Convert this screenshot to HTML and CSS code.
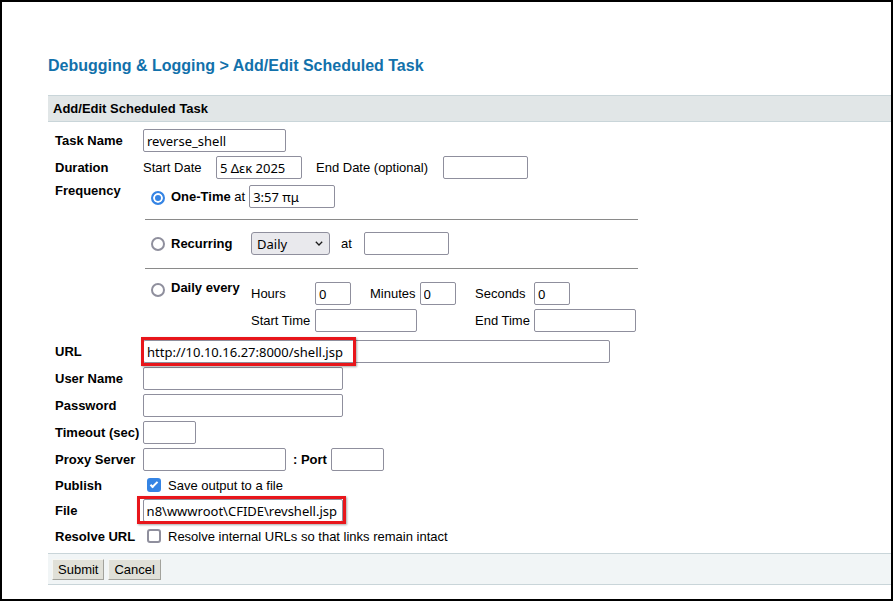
FILE: index.html
```html
<!DOCTYPE html>
<html lang="en">
<head>
<meta charset="utf-8">
<title>Add/Edit Scheduled Task</title>
<link rel="stylesheet" href="styles.css">
</head>
<body>
<div class="frame">
  <div class="page">
    <h1 class="crumb">Debugging &amp; Logging &gt; Add/Edit Scheduled Task</h1>
    <div class="band">Add/Edit Scheduled Task</div>
    <form class="form">
      <div class="label">Task Name</div>
      <div class="val"><input class="txt w143" type="text" value="reverse_shell"></div>

      <div class="label">Duration</div>
      <div class="val">
        <span class="lbl-start">Start Date</span>
        <input class="txt w86" type="text" value="5 Δεκ 2025">
        <span class="lbl-end">End Date (optional)</span>
        <input class="txt w85" type="text" value="">
      </div>

      <div class="label top">Frequency</div>
      <div class="freq">
        <div class="opt">
          <span class="rcell"><input class="radio nudge" type="radio" name="f" checked></span>
          <span><b>One-Time</b> at </span><input class="txt w86 ml4" type="text" value="3:57 πμ">
        </div>
        <div class="rule r1"></div>
        <div class="opt r2">
          <span class="rcell"><input class="radio" type="radio" name="f"></span>
          <b class="olabel">Recurring</b>
          <span class="selwrap">
            <select class="sel"><option>Daily</option></select>
            <svg class="chev" width="8" height="5" viewBox="0 0 8 5"><path d="M0.8 0.8 L4 4 L7.2 0.8" stroke="#1b1b1b" stroke-width="1.3" fill="none"/></svg>
          </span>
          <span class="at">at</span>
          <input class="txt w85 ml12" type="text" value="">
        </div>
        <div class="rule r3"></div>
        <div class="daily">
          <span class="rcell"><input class="radio dn" type="radio" name="f"></span>
          <b class="olabel lh">Daily every</b>
          <div class="dgrid">
            <span>Hours</span>
            <input class="txt w36" type="text" value="0">
            <span class="mins">Minutes <input class="txt w36" type="text" value="0"></span>
            <span>Seconds</span>
            <input class="txt w36" type="text" value="0">
            <span>Start Time</span>
            <input class="txt w102 span2" type="text" value="">
            <span>End Time</span>
            <input class="txt w102" type="text" value="">
          </div>
        </div>
      </div>

      <div class="label">URL</div>
      <div class="val rel">
        <input class="txt w467" type="text" value="http://10.10.16.27:8000/shell.jsp">
        <span class="mark mark-url"></span>
      </div>

      <div class="label">User Name</div>
      <div class="val"><input class="txt w200" type="text" value=""></div>

      <div class="label">Password</div>
      <div class="val"><input class="txt w200" type="password" value=""></div>

      <div class="label">Timeout (sec)</div>
      <div class="val"><input class="txt w53" type="text" value=""></div>

      <div class="label">Proxy Server</div>
      <div class="val">
        <input class="txt w143" type="text" value="">
        <b class="port">: Port</b>
        <input class="txt w53" type="text" value="">
      </div>

      <div class="label">Publish</div>
      <div class="val short">
        <input class="cb" type="checkbox" checked>
        <span>Save output to a file</span>
      </div>

      <div class="label">File</div>
      <div class="val rel">
        <input class="txt w200 rtl" type="text" value="C:\ColdFusion8\wwwroot\CFIDE\revshell.jsp">
        <span class="mark mark-file"></span>
      </div>

      <div class="label">Resolve URL</div>
      <div class="val short">
        <input class="cb" type="checkbox">
        <span>Resolve internal URLs so that links remain intact</span>
      </div>
    </form>
    <div class="footer">
      <button class="btn" type="button">Submit</button>
      <button class="btn" type="button">Cancel</button>
    </div>
  </div>
</div>
</body>
</html>
```

FILE: styles.css
```css
html, body {
  margin: 0;
  padding: 0;
  background: #fff;
}

body {
  font-family: "Liberation Sans", Arial, sans-serif;
  font-size: 13px;
  color: #000;
}

.frame {
  width: 893px;
  height: 601px;
  box-sizing: border-box;
  border: 2px solid #000;
  background: #fff;
  overflow: hidden;
}

.page {
  padding: 55px 0 0 46px;
}

.crumb {
  margin: 0;
  font-size: 16px;
  line-height: 18px;
  font-weight: bold;
  color: #1271ab;
}

.band {
  margin-top: 20px;
  height: 25px;
  line-height: 25px;
  border-top: 1px solid #c9d5d9;
  border-bottom: 1px solid #c9d5d9;
  background: #e1e6e7;
  padding-left: 5px;
  font-weight: bold;
}

.form {
  display: grid;
  grid-template-columns: 88px 1fr;
  row-gap: 4px;
  padding: 7px 0 7px 7px;
}

.label {
  font-weight: bold;
  align-self: center;
  white-space: nowrap;
}

.label.top {
  align-self: start;
  line-height: 15px;
}

.val {
  display: flex;
  align-items: center;
  min-height: 23px;
  white-space: nowrap;
}

.val.short {
  min-height: 20px;
  height: 20px;
}

.rel {
  position: relative;
}

.txt {
  box-sizing: border-box;
  height: 23px;
  margin: 0;
  padding: 0 3px;
  border: 1px solid #8f8f9d;
  border-radius: 2px;
  background: #fff;
  font-family: "Noto Sans", "Open Sans", sans-serif;
  font-size: 13px;
  color: #000;
  outline: none;
}

.rtl {
  direction: rtl;
  padding-right: 5px;
}

.w36 { width: 36px; }
.w53 { width: 53px; }
.w85 { width: 85px; }
.w86 { width: 86px; }
.w102 { width: 102px; }
.w143 { width: 143px; }
.w200 { width: 200px; }
.w467 { width: 467px; }
.ml4 { margin-left: 4px; }
.ml12 { margin-left: 12px; }

.lbl-start { width: 73px; }
.lbl-end { width: 127px; margin-left: 14px; }

/* Frequency block */
.freq {
  display: flex;
  flex-direction: column;
  margin-left: 2px;
  width: 493px;
  padding: 2px 0 4px;
}

.opt {
  display: flex;
  align-items: center;
  height: 23px;
  white-space: nowrap;
}

.rcell {
  box-sizing: border-box;
  width: 26px;
  padding-left: 6px;
  display: flex;
}

.olabel {
  width: 80px;
  flex: none;
}

.lh { line-height: 15px; }

.rule {
  height: 1px;
  background: #8a8a8a;
}

.r1 { margin-top: 11px; }
.r2 { margin-top: 12px; }
.r3 { margin-top: 13px; }

.daily {
  display: flex;
  align-items: flex-start;
  margin-top: 11px;
}

.dgrid {
  display: grid;
  grid-template-columns: 64px 55px 105px 59px auto;
  row-gap: 4px;
  align-items: center;
  margin-top: 2px;
  white-space: nowrap;
}

.mins {
  display: flex;
  align-items: center;
  gap: 4px;
}

.span2 {
  grid-column: span 2;
}

.at {
  margin-left: 11px;
}

.port {
  margin-left: 7px;
  margin-right: 4px;
}

/* Radios and checkboxes */
.radio {
  appearance: none;
  -webkit-appearance: none;
  box-sizing: border-box;
  width: 14px;
  height: 14px;
  margin: 0;
  border: 2px solid #8f8f9d;
  border-radius: 50%;
  background: #fff;
  flex: none;
}

.radio:checked {
  border-color: #3584e4;
  background: #3584e4;
  box-shadow: inset 0 0 0 2px #fff;
}

.nudge { margin-top: 3px; }
.dn { margin-top: 3px; }

.cb {
  appearance: none;
  -webkit-appearance: none;
  box-sizing: border-box;
  width: 14px;
  height: 14px;
  margin: 0 7px 0 4px;
  border: 2px solid #8f8f9d;
  border-radius: 3px;
  background: #fff;
  flex: none;
}

.cb:checked {
  border-color: #3584e4;
  background: #3584e4;
}

.cb:checked::before {
  content: "";
  display: block;
  box-sizing: border-box;
  width: 4px;
  height: 8px;
  margin: 0 0 0 2.5px;
  border: solid #fff;
  border-width: 0 2px 2px 0;
  transform: rotate(45deg);
}

/* Select */
.selwrap {
  position: relative;
  display: inline-flex;
}

.sel {
  appearance: none;
  -webkit-appearance: none;
  box-sizing: border-box;
  width: 79px;
  height: 23px;
  margin: 0;
  padding: 0 0 0 5px;
  border: 1px solid #8f8f9d;
  border-radius: 3px;
  background: #e9e9ed;
  font-family: "Noto Sans", "Open Sans", sans-serif;
  font-size: 13px;
  color: #000;
}

.chev {
  position: absolute;
  right: 7px;
  top: 9px;
  pointer-events: none;
}

/* Red annotation boxes */
.mark {
  position: absolute;
  box-sizing: border-box;
  border: 3px solid #e8161b;
  box-shadow: 1px 1px 2px rgba(0, 0, 0, 0.35);
  pointer-events: none;
}

.mark-url {
  left: -2px;
  top: -3px;
  width: 215px;
  height: 29px;
}

.mark-file {
  left: -6px;
  top: -3px;
  width: 209px;
  height: 28px;
}

/* Footer */
.footer {
  display: flex;
  gap: 4px;
  padding: 5px 4px 4px;
  border-top: 1px solid #c9d5d9;
  border-bottom: 1px solid #c9d5d9;
  background: #f1f5f6;
}

.btn {
  box-sizing: border-box;
  height: 21px;
  margin: 0;
  padding: 0 5px;
  border: 1px solid;
  border-color: #f6f6f2 #a2a29c #a2a29c #f6f6f2;
  background: #e0e0d8;
  font-family: "Liberation Sans", Arial, sans-serif;
  font-size: 13px;
  color: #000;
}
```
